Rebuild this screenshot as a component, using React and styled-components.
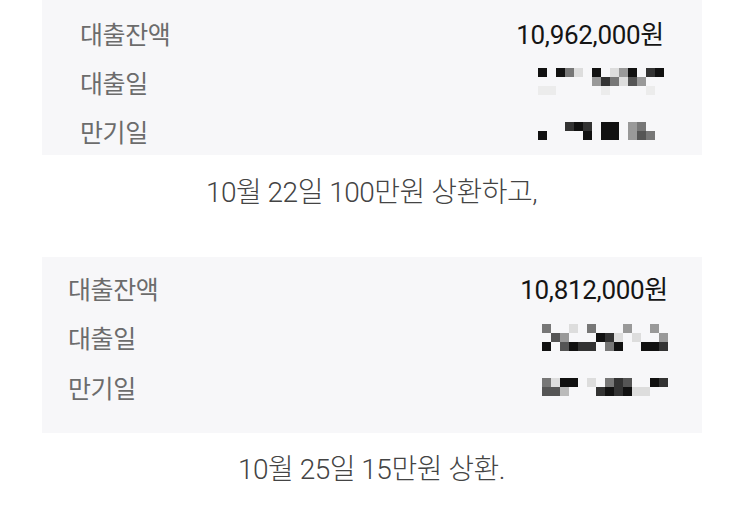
import React from 'react';
import styled, { createGlobalStyle } from 'styled-components';

const GlobalStyle = createGlobalStyle`
body {
  margin: 0;
  background: #ffffff;
  font-family: Roboto, "Noto Sans CJK KR", sans-serif;
}
`;

const Page = styled.div`
width: 743px;
display: flex;
flex-direction: column;
`;

const Card = styled.div`
margin: 0 41px 0 42px;
background-color: #f7f7f9;
padding: ${(p) => p.$padTop}px ${(p) => p.$padRight}px ${(p) => p.$padBottom}px ${(p) => p.$padLeft}px;
display: flex;
flex-direction: column;
`;

const Row = styled.div`
height: ${(p) => p.$h}px;
display: flex;
align-items: center;
justify-content: space-between;
`;

const Label = styled.span`
font-family: "Noto Sans CJK KR", sans-serif;
font-size: 25px;
letter-spacing: -0.4px;
color: #6c6c6c;
`;

const Amount = styled.span`
font-family: Roboto, "Noto Sans CJK KR", sans-serif;
font-size: 26px;
letter-spacing: -0.3px;
color: #151515;
`;

const Mosaic = styled.div`
display: grid;
grid-template-columns: repeat(14, 9px);
grid-auto-rows: 9px;
filter: blur(0.5px);
`;

const Cell = styled.div`
background-color: ${(p) => p.$c};
`;

const Caption = styled.div`
text-align: center;
font-family: Roboto, "Noto Sans CJK KR", sans-serif;
font-size: 28px;
font-weight: 300;
line-height: 40px;
letter-spacing: -0.5px;
color: #444444;
margin: ${(p) => p.$mt}px 0 ${(p) => p.$mb}px;
`;

const shade = {
  k: '#111111',
  d: '#333333',
  m: '#555555',
  g: '#777777',
  s: '#999999',
  l: '#bbbbbb',
  e: '#dddddd',
  f: '#ececec',
};

// one string per row of 9px cells, '.' is empty
const mosaics = {
  a1: ['k.kge.k.esk.dk', '......sdgems..', 'ff.....f....f.'],
  a2: ['...dkd.kk.sg..', 'k....k.kk.smg.'],
  b1: ['g..e.g...s..s.', '.ms...kde.e..s', 'k.mkdd.gk..kkd'],
  b2: ['gekk.e.gdm..kd', 'mml...dkdkee..'],
};

const Pixelated = ({ rows }) => (
  <Mosaic>
    {rows.map((r, i) =>
      r.split('').map((ch, j) => <Cell key={i + '-' + j} $c={shade[ch] || 'transparent'} />)
    )}
  </Mosaic>
);

const LoanCard = ({ amount, due, end, pad }) => (
  <Card $padTop={pad.t} $padRight={pad.r} $padBottom={pad.b} $padLeft={pad.l}>
    <Row $h={pad.h}>
      <Label>대출잔액</Label>
      <Amount>{amount}</Amount>
    </Row>
    <Row $h={pad.h}>
      <Label>대출일</Label>
      <Pixelated rows={due} />
    </Row>
    <Row $h={pad.h}>
      <Label>만기일</Label>
      <Pixelated rows={end} />
    </Row>
  </Card>
);

export default function App() {
  return (
    <Page>
      <GlobalStyle />
      <LoanCard
        amount="10,962,000원"
        due={mosaics.a1}
        end={mosaics.a2}
        pad={{ t: 8, r: 38, b: 0, l: 38, h: 49 }}
      />
      <Caption $mt={18} $mb={44}>10월 22일 100만원 상환하고,</Caption>
      <LoanCard
        amount="10,812,000원"
        due={mosaics.b1}
        end={mosaics.b2}
        pad={{ t: 6, r: 34, b: 21, l: 26, h: 49.5 }}
      />
      <Caption $mt={17} $mb={0}>10월 25일 15만원 상환.</Caption>
    </Page>
  );
}
